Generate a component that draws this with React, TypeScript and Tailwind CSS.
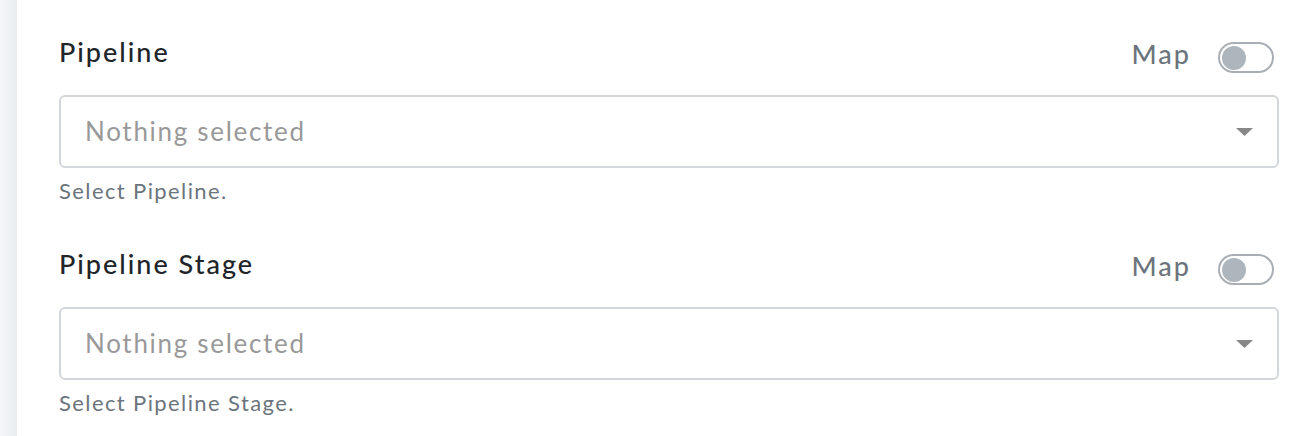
import React from 'react';

const fields = [
  { label: 'Pipeline', help: 'Select Pipeline.' },
  { label: 'Pipeline Stage', help: 'Select Pipeline Stage.' },
];

const Toggle: React.FC = () => (
  <div className="w-[56px] h-[31px] rounded-full border-2 border-[#a9aeb4] bg-white flex items-center px-[2px]">
    <div className="w-[24px] h-[24px] rounded-full bg-[#adb5bd]" />
  </div>
);

const App: React.FC = () => {
  return (
    <div className="flex h-[436px] overflow-hidden bg-white font-['Lato','Liberation_Sans',sans-serif]">
      <div className="w-[17px] shrink-0 bg-gradient-to-r from-[#f5f7f9] to-[#e9edf0]" />
      <div className="flex-1 flex flex-col gap-[48px] pl-[42px] pr-[33px] pt-[42px]">
        {fields.map((f) => (
          <div key={f.label}>
            <div className="flex items-center justify-between h-[31px]">
              <span className="text-[27px] font-medium text-[#212529] tracking-[2px] leading-none -mt-[12px]">
                {f.label}
              </span>
              <div className="flex items-center gap-[27px] pr-[5px]">
                <span className="text-[27px] font-medium text-[#6c757d] tracking-[2px] leading-none -mt-[8px]">Map</span>
                <Toggle />
              </div>
            </div>
            <div className="mt-[22px] h-[73px] rounded-[6px] border-2 border-[#d3d7dc] bg-white flex items-center justify-between pl-[24px] pr-[24px]">
              <span className="text-[26px] text-[#999999] tracking-[1.7px]">Nothing selected</span>
              <svg width="17" height="8" viewBox="0 0 17 8" className="fill-[#888888]">
                <path d="M0 0 L17 0 L8.5 8 Z" />
              </svg>
            </div>
            <p className="mt-[8px] text-[22px] text-[#6c757d] tracking-[1.4px] leading-[30px]">{f.help}</p>
          </div>
        ))}
      </div>
    </div>
  );
};

export default App;
